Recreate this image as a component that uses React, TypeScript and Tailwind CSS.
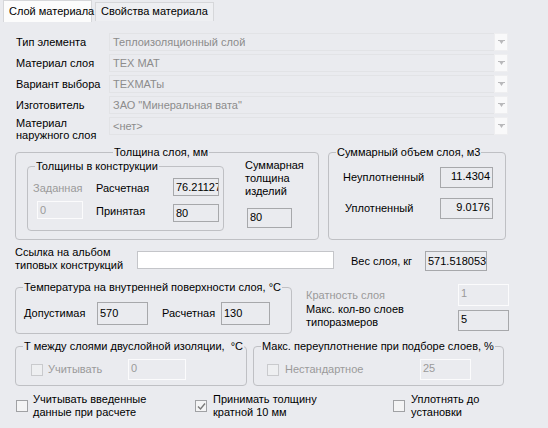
import { ReactNode } from 'react'

const BG = 'bg-[#eaebef]'

function GroupBox({
  title,
  className,
  titleClass = 'left-[7px]',
  children,
}: {
  title: string
  className: string
  titleClass?: string
  children: ReactNode
}) {
  return (
    <div className={`relative border border-[#bfc0c4] rounded-[4px] ${className}`}>
      <span className={`absolute top-[-8px] ${titleClass} px-[1px] leading-[14px] whitespace-pre ${BG}`}>
        {title}
      </span>
      {children}
    </div>
  )
}

function Field({
  value,
  className,
  variant = 'readonly',
  right = false,
}: {
  value?: string
  className: string
  variant?: 'readonly' | 'disabled' | 'white'
  right?: boolean
}) {
  const look =
    variant === 'disabled'
      ? 'border-[#fbfbfc] text-[#9a9a9a]'
      : variant === 'white'
        ? 'border-[#c4c5c9] bg-white'
        : 'border-[#a7a8ab]'
  return (
    <div
      className={`shrink-0 border overflow-hidden whitespace-nowrap leading-[14px] pt-[1px] ${
        right ? 'text-right pr-[2px]' : 'pl-[2px]'
      } ${look} ${className}`}
    >
      {value}
    </div>
  )
}

function Check({ checked = false, disabled = false }: { checked?: boolean; disabled?: boolean }) {
  return (
    <div
      className={`w-[12px] h-[12px] shrink-0 border flex items-center justify-center ${
        disabled ? 'border-[#c9cacd] bg-[#eeeff1]' : 'border-[#a0a1a4] bg-[#f4f4f5]'
      }`}
    >
      {checked && (
        <svg width="9" height="9" viewBox="0 0 9 9">
          <path d="M1 4.5 L3.5 7 L8 1.5" fill="none" stroke="#7a7a7a" strokeWidth="1.4" />
        </svg>
      )}
    </div>
  )
}

function Combo({ value }: { value: string }) {
  return (
    <div className="w-[399px] h-[18px] flex border border-[#e2e3e6] border-r-0">
      <div className="flex-1 pl-[3px] leading-[16px] text-[#8c8c8c] whitespace-nowrap">{value}</div>
      <div className="w-[14px] h-[18px] -mt-[1px] bg-[#f9f9fa] border border-[#eeeef0] flex items-center justify-center">
        <svg width="7" height="4" viewBox="0 0 7 4">
          <path d="M0 0 H7 V1 H0 Z M1.5 1 H5.5 L3.5 4 Z" fill="#b9b9bb" />
        </svg>
      </div>
    </div>
  )
}

const combos: [string, string][] = [
  ['Тип элемента', 'Теплоизоляционный слой'],
  ['Материал слоя', 'ТЕХ МАТ'],
  ['Вариант выбора', 'ТЕХМАТы'],
  ['Изготовитель', 'ЗАО "Минеральная вата"'],
]

export default function App() {
  return (
    <div
      className={`w-[548px] h-[428px] overflow-hidden ${BG} text-[11px] text-black`}
      style={{ fontFamily: '"Liberation Sans", Arial, sans-serif' }}
    >
      {/* tabs */}
      <div className="flex items-start pl-[3px] h-[22px]">
        <div className="h-[22px] w-[89px] bg-[#fcfcfc] border border-b-0 border-[#d6d7da] pl-[5px] leading-[20px] whitespace-nowrap">
          Слой материала
        </div>
        <div className="mt-[2px] ml-[3px] h-[19px] w-[119px] border border-b-0 border-[#d6d7da] pl-[5px] leading-[17px] whitespace-nowrap bg-[#eeeff2]">
          Свойства материала
        </div>
      </div>

      {/* combo rows */}
      <div className="mt-[11px] pl-[16px] flex flex-col gap-[3px]">
        {combos.map(([label, value]) => (
          <div key={label} className="flex items-center h-[18px]">
            <div className="w-[93px] whitespace-nowrap">{label}</div>
            <Combo value={value} />
          </div>
        ))}
        <div className="flex items-start h-[18px]">
          <div className="w-[93px] leading-[12px]">
            Материал
            <br />
            наружного слоя
          </div>
          <Combo value="<нет>" />
        </div>
      </div>

      {/* thickness / volume */}
      <div className="flex mt-[17px] ml-[15px] gap-[9px]">
        <GroupBox title="Толщина слоя, мм" className="w-[304px] h-[88px] flex" titleClass="left-[97px]">
          <GroupBox title="Толщины в конструкции" className="ml-[11px] mt-[13px] w-[197px] h-[65px] flex">
            <div className="w-[68px] pl-[5px]">
              <div className="mt-[13px] h-[14px] text-[#9a9a9a]">Заданная</div>
              <Field value="0" variant="disabled" className="mt-[7px] ml-[4px] w-[46px] h-[18px]" />
            </div>
            <div className="w-[77px]">
              <div className="mt-[13px] h-[14px]">Расчетная</div>
              <div className="mt-[9px] h-[14px]">Принятая</div>
            </div>
            <div>
              <Field value="76.21127" className="mt-[11px] w-[46px] h-[18px]" />
              <Field value="80" className="mt-[8px] w-[46px] h-[18px]" />
            </div>
          </GroupBox>
          <div className="ml-[21px]">
            <div className="mt-[6px] leading-[13px]">
              Суммарная
              <br />
              толщина
              <br />
              изделий
            </div>
            <Field value="80" className="mt-[10px] ml-[2px] w-[45px] h-[20px]" />
          </div>
        </GroupBox>

        <GroupBox title="Суммарный объем слоя, м3" className="w-[178px] h-[88px]">
          <div className="mt-[14px] flex items-center h-[21px] pl-[14px]">
            <div className="w-[97px]">Неуплотненный</div>
            <Field value="11.4304" right className="w-[53px] h-[21px]" />
          </div>
          <div className="mt-[10px] flex items-center h-[21px] pl-[16px]">
            <div className="w-[95px]">Уплотненный</div>
            <Field value="9.0176" right className="w-[53px] h-[21px]" />
          </div>
        </GroupBox>
      </div>

      {/* album link / weight */}
      <div className="flex items-start mt-[6px] ml-[15px]">
        <div className="w-[122px] leading-[13px]">
          Ссылка на альбом
          <br />
          типовых конструкций
        </div>
        <Field variant="white" className="mt-[5px] w-[197px] h-[18px]" />
        <div className="ml-[17px] mt-[7px] w-[74px]">Вес слоя, кг</div>
        <Field value="571.518053" className="mt-[5px] w-[62px] h-[20px] pt-[2px]" />
      </div>

      {/* temperature / layers */}
      <div className="flex items-start mt-[12px] ml-[15px]">
        <GroupBox title="Температура на внутренней поверхности слоя, °C" className="mt-[3px] w-[277px] h-[47px]">
          <div className="mt-[14px] pl-[8px] flex items-center h-[23px]">
            <div className="w-[73px]">Допустимая</div>
            <Field value="570" className="w-[51px] h-[23px] pt-[3px]" />
            <div className="ml-[14px] w-[59px]">Расчетная</div>
            <Field value="130" className="w-[49px] h-[23px] pt-[3px]" />
          </div>
        </GroupBox>
        <div className="ml-[14px]">
          <div className="flex items-center h-[22px]">
            <div className="w-[152px] text-[#9a9a9a]">Кратность слоя</div>
            <Field value="1" variant="disabled" className="w-[51px] h-[22px]" />
          </div>
          <div className="flex items-start">
            <div className="w-[152px] leading-[13px] -mt-[3px]">
              Макс. кол-во слоев
              <br />
              типоразмеров
            </div>
            <Field value="5" className="mt-[4px] w-[51px] h-[21px]" />
          </div>
        </div>
      </div>

      {/* bottom groups */}
      <div className="flex mt-[12px] ml-[15px] gap-[6px]">
        <GroupBox title={'Т между слоями двуслойной изоляции,  °C'} className="w-[232px] h-[40px]">
          <div className="mt-[12px] pl-[15px] flex items-center h-[21px]">
            <Check disabled />
            <div className="ml-[5px] w-[80px] text-[#9a9a9a]">Учитывать</div>
            <Field value="0" variant="disabled" className="w-[58px] h-[21px]" />
          </div>
        </GroupBox>
        <GroupBox title="Макс. переуплотнение при подборе слоев, %" className="w-[251px] h-[40px]">
          <div className="mt-[12px] pl-[13px] flex items-center h-[21px]">
            <Check disabled />
            <div className="ml-[6px] w-[135px] text-[#9a9a9a]">Нестандартное</div>
            <Field value="25" variant="disabled" className="w-[51px] h-[21px]" />
          </div>
        </GroupBox>
      </div>

      {/* bottom checkboxes */}
      <div className="flex items-center mt-[7px] ml-[16px] leading-[13px]">
        <div className="w-[179px] flex items-center">
          <Check />
          <div className="ml-[5px]">
            Учитывать введенные
            <br />
            данные при расчете
          </div>
        </div>
        <div className="w-[198px] flex items-center">
          <Check checked />
          <div className="ml-[6px]">
            Принимать толщину
            <br />
            кратной 10 мм
          </div>
        </div>
        <div className="flex items-center">
          <Check />
          <div className="ml-[6px]">
            Уплотнять до
            <br />
            установки
          </div>
        </div>
      </div>
    </div>
  )
}
